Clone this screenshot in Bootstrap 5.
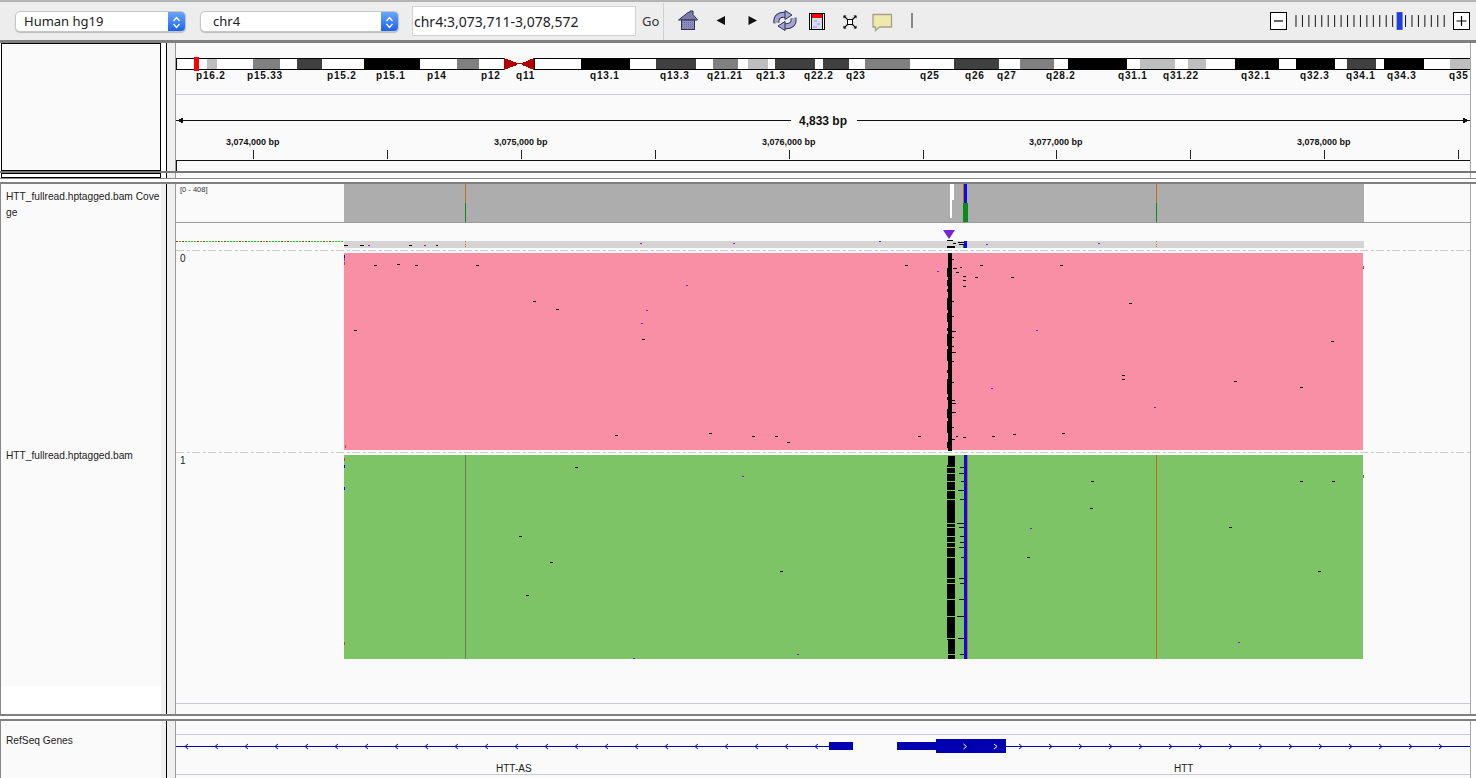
<!DOCTYPE html>
<html lang="en">
<head>
<meta charset="utf-8">
<title>IGV</title>
<link href="https://cdn.jsdelivr.net/npm/bootstrap@5.3.0/dist/css/bootstrap.min.css" rel="stylesheet">
<style>
html,body{height:778px;overflow:hidden;background:#fff;font-family:"Liberation Sans",Arial,sans-serif}
.igv-top{height:43px;background:#ededed;border-top:2px solid #b4b4b4;border-bottom:3px solid #808080;padding-left:15px}
.igv-combo{height:21px;background:#fff;border:1px solid #c6c6c6;border-radius:5px;font:13px "Noto Sans",sans-serif;color:#222;overflow:hidden;box-shadow:0 1px 1px #bbb}
.igv-combo span{padding-left:8px;line-height:19px}
.combo-a{width:171px}.combo-b{width:199px;margin-left:14px}
.combo-b span{padding-left:12px}
.igv-arrow{width:17px;height:100%;background:linear-gradient(#6aa6f8,#1c62ee)}
.igv-loc{width:224px;height:30px;margin-left:13px;padding:0 0 0 1px;border:1px solid #d2d2d2;border-radius:0;font:14px "Noto Sans",sans-serif;color:#222;box-shadow:none}
.igv-go{font:13px "Noto Sans",sans-serif;color:#333;margin-left:6px;width:21px}
.igv-sep{width:1px;height:37px;background:#d0d0d0;margin-right:14px}
.igv-icon{display:block;flex:none}
.igv-zoom{margin-left:auto;margin-right:6px;width:200px}
.igv-zbtn{width:17px;height:18px;border:1px solid #000;background:#fff;flex:none;display:block}
.igv-scale{flex:1;height:18px;margin:0 8px 0 8px;display:block}
.igv-row{display:flex;background:#fff}
.igv-name{width:161px;flex:none;background:#fafafa;font-size:10.2px;line-height:16px;color:#222;white-space:nowrap;overflow:hidden;position:relative}
.igv-attr{width:10px;flex:none;background:#efefef;border-left:1px solid #000;border-right:1px solid #9a9a9a}
.igv-pad{width:5px;flex:none;background:#f0f0f0}
.igv-data{width:1294px;flex:none;background:#fafafa}
.igv-data svg{display:block}
.igv-rest{flex:1;background:#fff;border-left:1px solid #aaa}
.row-head{height:128px}
.row-head .igv-name{border:1px solid #000;width:160px;margin-left:1px;background:#fafafa}
.row-head .igv-attr,.row-slim .igv-attr{margin-left:5px}
.igv-rule{height:2px;background:#777}
.row-slim{height:5px}
.row-slim .igv-name{border:1px solid #000;width:160px;margin-left:1px;background:#fff}
.igv-gap1{height:4px;background:#fff;border-top:1px solid #888}
.row-main{height:534px;border-top:2px solid #808080;border-bottom:2px solid #808080}
.row-main .igv-name,.row-gene .igv-name{border-left:1px solid #888;padding-left:5px}
.igv-lab1{padding-top:5px;height:264px}
.igv-lab2{height:232px}
.igv-white{position:absolute;left:0;right:0;bottom:0;height:28px;background:#fff}
.igv-gap2{height:3px;background:#fff}
.row-gene{height:59px;border-top:2px solid #808080}
.igv-lab3{padding-top:12px}
svg text{font-family:"Liberation Sans",Arial,sans-serif}
.t-band{font-size:10px;font-weight:700;letter-spacing:.8px;fill:#111}
.t-tick{font-size:9px;font-weight:700;fill:#111}
.t-span{font-size:12px;font-weight:700;fill:#111}
.t-gene{font-size:10px;fill:#222}
.t-small{font-size:7.5px;fill:#333}
.t-num{font-size:10px;fill:#222}
</style>
</head>
<body>
<div class="igv-top d-flex align-items-center">
  <div class="igv-combo combo-a d-flex justify-content-between"><span>Human hg19</span>
    <div class="igv-arrow"><svg width="17" height="19" viewBox="0 0 17 19"><path d="M5.5 8 8.5 4.500 11.500 8M5.500 11 8.500 14.500 11.500 11" fill="none" stroke="#fff" stroke-width="1.300"/></svg></div></div>
  <div class="igv-combo combo-b d-flex justify-content-between"><span>chr4</span>
    <div class="igv-arrow"><svg width="17" height="19" viewBox="0 0 17 19"><path d="M5.5 8 8.5 4.500 11.500 8M5.500 11 8.500 14.500 11.500 11" fill="none" stroke="#fff" stroke-width="1.300"/></svg></div></div>
  <input class="form-control igv-loc" value="chr4:3,073,711-3,078,572" aria-label="Locus">
  <div class="igv-go">Go</div>
  <div class="igv-sep"></div>
  <svg class="igv-icon" width="240" height="26" viewBox="678 8 240 26">
    <defs><pattern id="hatch" width="2" height="2" patternUnits="userSpaceOnUse"><rect width="2" height="2" fill="#8f8fbd"/><rect width="1" height="1" fill="#6f6fa0"/></pattern></defs>
    <path d="M678.500 20 688 12.500l2-.5 0-1h3v3.500l4.500 5.500z" fill="#7c7ca8" stroke="#33335a"/>
    <rect x="681.500" y="20" width="13" height="9.500" fill="url(#hatch)" stroke="#33335a"/>
    <path d="M725 16v9l-8.500-4.500z" fill="#111"/>
    <path d="M748.500 16v9l8.500-4.500z" fill="#111"/>
    <g fill="none" stroke-linecap="butt">
      <path d="M776.500 23c-1-6 3-9 10-8" stroke="#2e2e55" stroke-width="6"/>
      <path d="M776.500 23c-1-6 3-9 10-8" stroke="#a6a6d4" stroke-width="4"/>
      <path d="M793.500 18c1 6-3 9-10 8" stroke="#2e2e55" stroke-width="6"/>
      <path d="M793.500 18c1 6-3 9-10 8" stroke="#a6a6d4" stroke-width="4"/>
    </g>
    <path d="M785 10.500 792 15l-7 4.500z" fill="#a6a6d4" stroke="#2e2e55"/>
    <path d="M785 21.500 778 26l7 4.500z" fill="#a6a6d4" stroke="#2e2e55"/>
    <rect x="809.500" y="13.500" width="15" height="16" fill="#fff" stroke="#000"/>
    <rect x="812" y="14" width="10" height="4" fill="#f00"/>
    <rect x="812" y="18" width="10" height="11" fill="#dcdcf0"/>
    <path d="M814 20h3v2h-3zM817 23h3v2h-3zM813 26h4v2h-4z" fill="#b8b8e0"/>
    <path d="M811.500 14v15M822.500 14v15" stroke="#000"/>
    <rect x="847.500" y="19.500" width="5" height="5" fill="#fff" stroke="#000"/>
    <path d="M844 16l3.500 3.500M856 16l-3.500 3.500M844 28l3.500-3.500M856 28l-3.500-3.500" stroke="#000" stroke-width="1.200"/>
    <path d="M843.500 15.500h3l-3 3zM856.500 15.500h-3l3 3zM843.500 28.500h3l-3-3zM856.500 28.500h-3l3-3z" fill="#000"/>
    <path d="M873 14.500h18.500v12.500h-12l-4 3.500v-3.500h-2.500z" fill="#efe9ae" stroke="#a3a38a" stroke-width="1.300"/>
    <rect x="911" y="13" width="2" height="15" fill="#888"/>
  </svg>
  <div class="igv-zoom d-flex align-items-center">
    <svg class="igv-zbtn" viewBox="0 0 15 16"><path d="M3 8h9" stroke="#000" stroke-width="1.200"/></svg>
    <svg class="igv-scale" id="zs" viewBox="0 0 152 18"></svg>
    <svg class="igv-zbtn" viewBox="0 0 15 16"><path d="M2.500 8h10M7.500 3v10" stroke="#000" stroke-width="1.200"/></svg>
  </div>
</div>

<div class="igv-row row-head">
  <div class="igv-name"></div>
  <div class="igv-attr"></div>
  <div class="igv-data">
    <svg id="hd" width="1294" height="128" viewBox="176 43 1294 128" shape-rendering="crispEdges">
      <g id="hd-g"></g>
      <g shape-rendering="auto">
        <text class="t-band" x="196" y="79">p16.2</text><text class="t-band" x="247" y="79">p15.33</text><text class="t-band" x="327" y="79">p15.2</text><text class="t-band" x="376" y="79">p15.1</text><text class="t-band" x="427" y="79">p14</text><text class="t-band" x="481" y="79">p12</text><text class="t-band" x="516" y="79">q11</text><text class="t-band" x="590" y="79">q13.1</text><text class="t-band" x="660" y="79">q13.3</text><text class="t-band" x="707" y="79">q21.21</text><text class="t-band" x="756" y="79">q21.3</text><text class="t-band" x="804" y="79">q22.2</text><text class="t-band" x="846" y="79">q23</text><text class="t-band" x="920" y="79">q25</text><text class="t-band" x="965" y="79">q26</text><text class="t-band" x="997" y="79">q27</text><text class="t-band" x="1046" y="79">q28.2</text><text class="t-band" x="1118" y="79">q31.1</text><text class="t-band" x="1163" y="79">q31.22</text><text class="t-band" x="1241" y="79">q32.1</text><text class="t-band" x="1300" y="79">q32.3</text><text class="t-band" x="1346" y="79">q34.1</text><text class="t-band" x="1387" y="79">q34.3</text><text class="t-band" x="1449" y="79">q35</text>
        <text class="t-span" x="799" y="125">4,833 bp</text>
        <text class="t-tick" x="226" y="145">3,074,000 bp</text><text class="t-tick" x="494" y="145">3,075,000 bp</text><text class="t-tick" x="762" y="145">3,076,000 bp</text><text class="t-tick" x="1029" y="145">3,077,000 bp</text><text class="t-tick" x="1297" y="145">3,078,000 bp</text>
      </g>
    </svg>
  </div>
  <div class="igv-rest"></div>
</div>
<div class="igv-rule"></div>
<div class="igv-row row-slim">
  <div class="igv-name"></div><div class="igv-attr"></div><div class="igv-data"></div><div class="igv-rest"></div>
</div>
<div class="igv-gap1"></div>

<div class="igv-row row-main">
  <div class="igv-name">
    <div class="igv-lab1">HTT_fullread.hptagged.bam Cove<br>ge</div>
    <div class="igv-lab2">HTT_fullread.hptagged.bam</div>
    <div class="igv-white"></div>
  </div>
  <div class="igv-pad"></div>
  <div class="igv-attr"></div>
  <div class="igv-data">
    <svg id="mn" width="1294" height="530" viewBox="176 184 1294 530" shape-rendering="crispEdges">
      <g id="mn-g"></g>
      <g shape-rendering="auto">
        <text class="t-small" x="180" y="192">[0 - 408]</text>
        <text class="t-num" x="180" y="262">0</text>
        <text class="t-num" x="180" y="464">1</text>
        <path d="M943 230h12l-6 9z" fill="#7a22d8"/>
      </g>
    </svg>
  </div>
  <div class="igv-rest"></div>
</div>
<div class="igv-gap2"></div>

<div class="igv-row row-gene">
  <div class="igv-name"><div class="igv-lab3">RefSeq Genes</div></div>
  <div class="igv-pad"></div>
  <div class="igv-attr"></div>
  <div class="igv-data">
    <svg id="gn" width="1294" height="57" viewBox="176 721 1294 57" shape-rendering="crispEdges">
      <g id="gn-g"></g>
      <g shape-rendering="auto">
        <text class="t-gene" x="496" y="772">HTT-AS</text>
        <text class="t-gene" x="1174" y="772">HTT</text>
      </g>
    </svg>
  </div>
  <div class="igv-rest"></div>
</div>

<script src="https://cdn.jsdelivr.net/npm/bootstrap@5.3.0/dist/js/bootstrap.bundle.min.js"></script>
<script>
function rects(list){return list.map(function(r){return '<rect x="'+r[0]+'" y="'+r[1]+'" width="'+r[2]+'" height="'+r[3]+'" fill="'+r[4]+'"/>';}).join('');}
var z=[];for(var i=0;i<24;i++){z.push([.5+i*6.53,3,1,12,'#111']);}
z=z.filter(function(r,i){return i!==16;});
z.push([103,0,6,18,'#1f3fd6']);
document.getElementById('zs').innerHTML=rects(z);
var K='#000',D='#404040',G='#808080',L='#bebebe';
var bands=[[206.500,10,L],[252.500,27,G],[297,25,D],[364,56,K],[457,22,G],[581,49,K],[656,40,D],[713,25,G],[748,20,L],[775,40,D],[823,26,D],[865,45,G],[954,45,D],[1020,34,G],[1068,59,K],[1140,35,L],[1188,18,L],[1235,44,K],[1296,39,K],[1347,29,D],[1384,40,K],[1450,20,L]];
var h=[[176,58,328,1,K],[176,69,328,1,K],[535,58,935,1,K],[535,69,935,1,K],[176,59,328,10,'#fff'],[535,59,935,10,'#fff'],[176,58,1,12,K],[534,58,1,12,K]];
bands.forEach(function(b){h.push([b[0],59,b[1],10,b[2]]);});
h.push([194,57,5,14,'#f00']);
h.push([176,94,1294,1,'#c9c9d6'],[176,120,615,1,'#111'],[857,120,613,1,'#111'],[176,160,1294,1,'#111'],[176,160,1,11,'#111']);
[253,387,521,655,789,923,1056,1190,1324,1458].forEach(function(x){h.push([x,150,1,9,'#222']);});
var hs=rects(h)+'<path d="M504 58v12l13-5v-2zM534 58v12l-12-5v-2z" fill="#b00000"/><rect x="517" y="63" width="5" height="1" fill="#b00000"/><path d="M177 120.500l6-3v6zM1469 120.500l-6-3v6z" fill="#111"/>';
document.getElementById('hd-g').innerHTML=hs;
var P='#7a22d8',O='#c86a14',B='#0a0af0',GN='#0a8a1a',BK='#000';
var m=[];
m.push([344,184,1020,38,'#adadad'],[176,222,1294,1,'#9a9a9a']);
m.push([465,184,1,19,O],[465,203,1,19,GN],[1156,184,1,19,O],[1156,203,1,19,GN]);
m.push([950,184,4,16,'#fff'],[950,200,2,18,'#fff']);
m.push([963,184,1,19,O],[964,184,3,19,B],[963,203,5,19,GN]);
m.push([344,241,1020,7,'#d4d4d4']);
for(var x=176;x<344;x+=3){m.push([x,241,2,1,(x%7<2)?'#c02020':'#22cc22']);}
m.push([947,240,6,1,BK],[953,243,3,1,BK],[958,242,6,1,BK],[959,244,6,1,BK],[947,246,8,2,BK],[964,241,3,7,B],[963,245,1,3,GN]);
[[986,244],[1098,243],[640,243],[733,243],[879,241],[368,245],[424,245]].forEach(function(a){m.push([a[0],a[1],2,1,P]);});
[[344,245,4],[360,245,4],[409,245,3],[436,245,2]].forEach(function(a){m.push([a[0],a[1],a[2],1,BK]);});
[241,244,246].forEach(function(y){m.push([1156,y,1,1,O]);m.push([465,y,1,1,O]);});
[250,452].forEach(function(y){for(var x=176;x<1470;x+=16){m.push([x,y,8,1,'#cccccc'],[x+11,y,3,1,'#cccccc']);}});
m.push([344,253,1019,197,'#f98fa5'],[344,455,1019,204,'#7dc466']);
var seed=7;function rnd(n){seed=(seed*73+41)%1009;return seed%n;}
for(var y=253;y<450;y+=3){var a=rnd(3);m.push([947+(y<268?1:a%2),y,(y<268?4:5-(a%2)),3,BK]);if(rnd(5)===0)m.push([952,y,2+rnd(3),1,BK]);}
[[953,268,4],[956,272,3],[963,276,3],[963,280,3],[963,286,3],[975,277,3],[960,267,2],[963,437,3],[956,436,2]].forEach(function(a){m.push([a[0],a[1],a[2],1,BK]);});
[[374,265],[397,264],[415,265],[476,265],[533,301],[556,309],[354,330],[642,339],[615,435],[709,433],[752,436],[775,436],[787,442],[905,265],[918,436],[1122,375],[1122,379],[1060,265],[1011,277],[1129,303],[1234,381],[1300,387],[1331,341],[1062,433],[1013,434],[992,436],[980,265]].forEach(function(a){m.push([a[0],a[1],3,1,BK]);});
[[686,285],[646,310],[641,323],[937,271],[1036,330],[991,388],[1154,407],[797,654],[633,658],[742,476],[1238,642],[1030,528]].forEach(function(a){m.push([a[0],a[1],2,1,P]);});
m.push([947,455,8,204,BK]);
var gaps=[455,467,473,481,490,499,523,527,536,542,547,557,578,583,599,616,638,654];
gaps.forEach(function(y,i){m.push([947,y,8,1,'#7dc466']);if(i){var w=[5,4,5,3,6,4,7,5,4,4,5,3,5,4,5,7,6,4][i];m.push([964-w,y,w,1,BK]);}});
m.push([947,455,1,10,'#7dc466'],[947,640,1,19,'#7dc466']);
m.push([964,455,3,204,B],[967,455,1,204,O]);
[[465,455,204,'#5a8a50'],[1156,455,204,O]].forEach(function(a){m.push([a[0],a[1],1,a[2],a[3]]);});
[[575,467],[519,536],[550,562],[526,595],[780,571],[1091,481],[1090,508],[1027,557],[1229,527],[1300,481],[1318,571],[1332,481]].forEach(function(a){m.push([a[0],a[1],3,1,BK]);});
[[344,255,B],[344,258,'#e03030'],[344,262,'#e03030'],[345,445,'#e03030'],[344,458,'#e03030'],[344,465,B],[344,487,B],[344,642,'#e03030'],[1363,266,'#e03030'],[1363,475,'#5a8a50']].forEach(function(a){m.push([a[0],a[1],1,3,a[2]]);});
m.push([176,703,1294,1,'#c9c9d6']);
document.getElementById('mn-g').innerHTML=rects(m);
var C='#0000b0',gg=[[176,734,1294,1,'#c9c9d6'],[176,774,1294,1,'#c9c9d6'],[176,746,653,1,C],[1006,746,464,1,C],[829,742,24,8,C],[897,742,39,8,C],[936,739,70,14,C]];
var chev='';
function ch(x,dir,col){return '<path d="M'+(x+dir*1.500)+' 744 '+(x-dir*1.500)+' 746.500 '+(x+dir*1.500)+' 749" fill="none" stroke="'+col+'" stroke-width="1"/>';}
for(var x=186.500;x<820;x+=30){chev+=ch(x,1,C);}
for(var x=1020.500;x<1445;x+=30){chev+=ch(x,-1,C);}
chev+=ch(965,-1,'#fff')+ch(995.500,-1,'#fff');
document.getElementById('gn-g').innerHTML=rects(gg)+'<g shape-rendering="auto">'+chev+'</g>';
</script>
</body>
</html>
